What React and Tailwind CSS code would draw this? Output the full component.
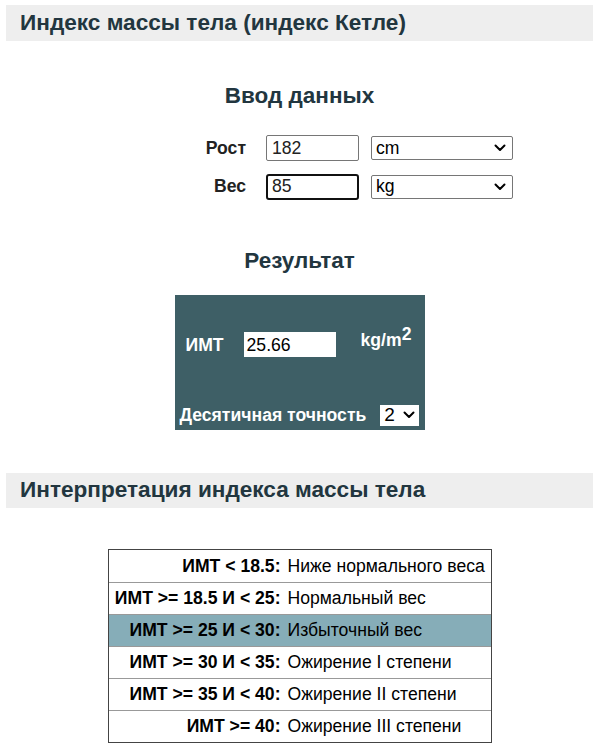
import React from 'react';

const rows = [
  ['ИМТ < 18.5:', 'Ниже нормального веса', false],
  ['ИМТ >= 18.5 И < 25:', 'Нормальный вес', false],
  ['ИМТ >= 25 И < 30:', 'Избыточный вес', true],
  ['ИМТ >= 30 И < 35:', 'Ожирение I степени', false],
  ['ИМТ >= 35 И < 40:', 'Ожирение II степени', false],
  ['ИМТ >= 40:', 'Ожирение III степени', false],
];

function Chevron({ className }) {
  return (
    <svg className={className} width="12" height="8" viewBox="0 0 12 8" fill="none">
      <path d="M1.5 1.5 L6 6 L10.5 1.5" stroke="#000" strokeWidth="2" strokeLinecap="round" strokeLinejoin="round" />
    </svg>
  );
}

function Select({ value, w, h = 'h-[24px]' }) {
  return (
    <div className={`${w} ${h} flex items-center justify-between border border-[#767676] rounded-[2px] bg-white pl-[4px] pr-[6px] text-[17.6px] text-black`}>
      <span>{value}</span>
      <Chevron />
    </div>
  );
}

export default function App() {
  return (
    <div className="w-[599px] h-[750px] bg-white pt-[5px] font-['Liberation_Sans',Arial,sans-serif] text-[#222]">
      <div className="mx-[6px] h-[36px] bg-[#eeeeee] flex items-center pl-[14px]">
        <h1 className="text-[22.6px] font-bold text-[#22363f] leading-none">Индекс массы тела (индекс Кетле)</h1>
      </div>

      <h2 className="mt-[43px] text-center text-[22.5px] font-bold text-[#22363f] leading-[24px]">Ввод данных</h2>

      <div className="mt-[27px] pl-[190px] flex flex-col gap-[12px]">
        <div className="flex items-center">
          <div className="w-[56px] text-right font-bold text-[17.6px]">Рост</div>
          <div className="ml-[20px] w-[93px] h-[26px] border border-[#767676] rounded-[2px] flex items-center pl-[5px] text-[17.6px]">182</div>
          <div className="ml-[12px]"><Select value="cm" w="w-[142px]" /></div>
        </div>
        <div className="flex items-center">
          <div className="w-[56px] text-right font-bold text-[17.6px]">Вес</div>
          <div className="ml-[20px] w-[93px] h-[26px] border-2 border-[#111] rounded-[3px] flex items-center pl-[4px] text-[17.6px]">85</div>
          <div className="ml-[12px]"><Select value="kg" w="w-[142px]" /></div>
        </div>
      </div>

      <h2 className="mt-[49px] text-center text-[22.5px] font-bold text-[#22363f] leading-[24px]">Результат</h2>

      <div className="mx-auto mt-[22px] w-[250px] h-[135px] bg-[#3e5f66] text-white font-bold text-[17.6px]">
        <div className="flex items-center pt-[37px] pl-[11px]">
          <span>ИМТ</span>
          <div className="ml-[20px] w-[92px] h-[25px] bg-white text-black font-normal flex items-center pl-[3px]">25.66</div>
          <span className="ml-[25px] -mt-[10px]">kg/m<sup className="text-[17.6px] top-[-0.35em]">2</sup></span>
        </div>
        <div className="flex items-center mt-[44px] pl-[5px]">
          <span>Десятичная точность</span>
          <div className="ml-[14px] w-[39px] h-[21px] bg-white text-black font-normal flex items-center justify-between pl-[4px] pr-[4px] text-[19px]">
            <span>2</span>
            <Chevron />
          </div>
        </div>
      </div>

      <div className="mx-[6px] mt-[43px] h-[35px] bg-[#eeeeee] flex items-center pl-[14px]">
        <h1 className="text-[22.6px] font-bold text-[#22363f] leading-none">Интерпретация индекса массы тела</h1>
      </div>

      <div className="mx-auto mt-[41px] w-[384px] border border-[#444]">
        {rows.map(([cond, label, hl], i) => (
          <div key={i} className={`flex items-center h-[32px] ${i > 0 ? 'border-t border-[#999]' : ''} ${hl ? 'bg-[#86adb8]' : ''}`}>
            <div className="w-[172px] text-right font-bold text-[17.6px] text-black">{cond}</div>
            <div className="ml-[7px] text-[17.6px] text-black">{label}</div>
          </div>
        ))}
      </div>
    </div>
  );
}
